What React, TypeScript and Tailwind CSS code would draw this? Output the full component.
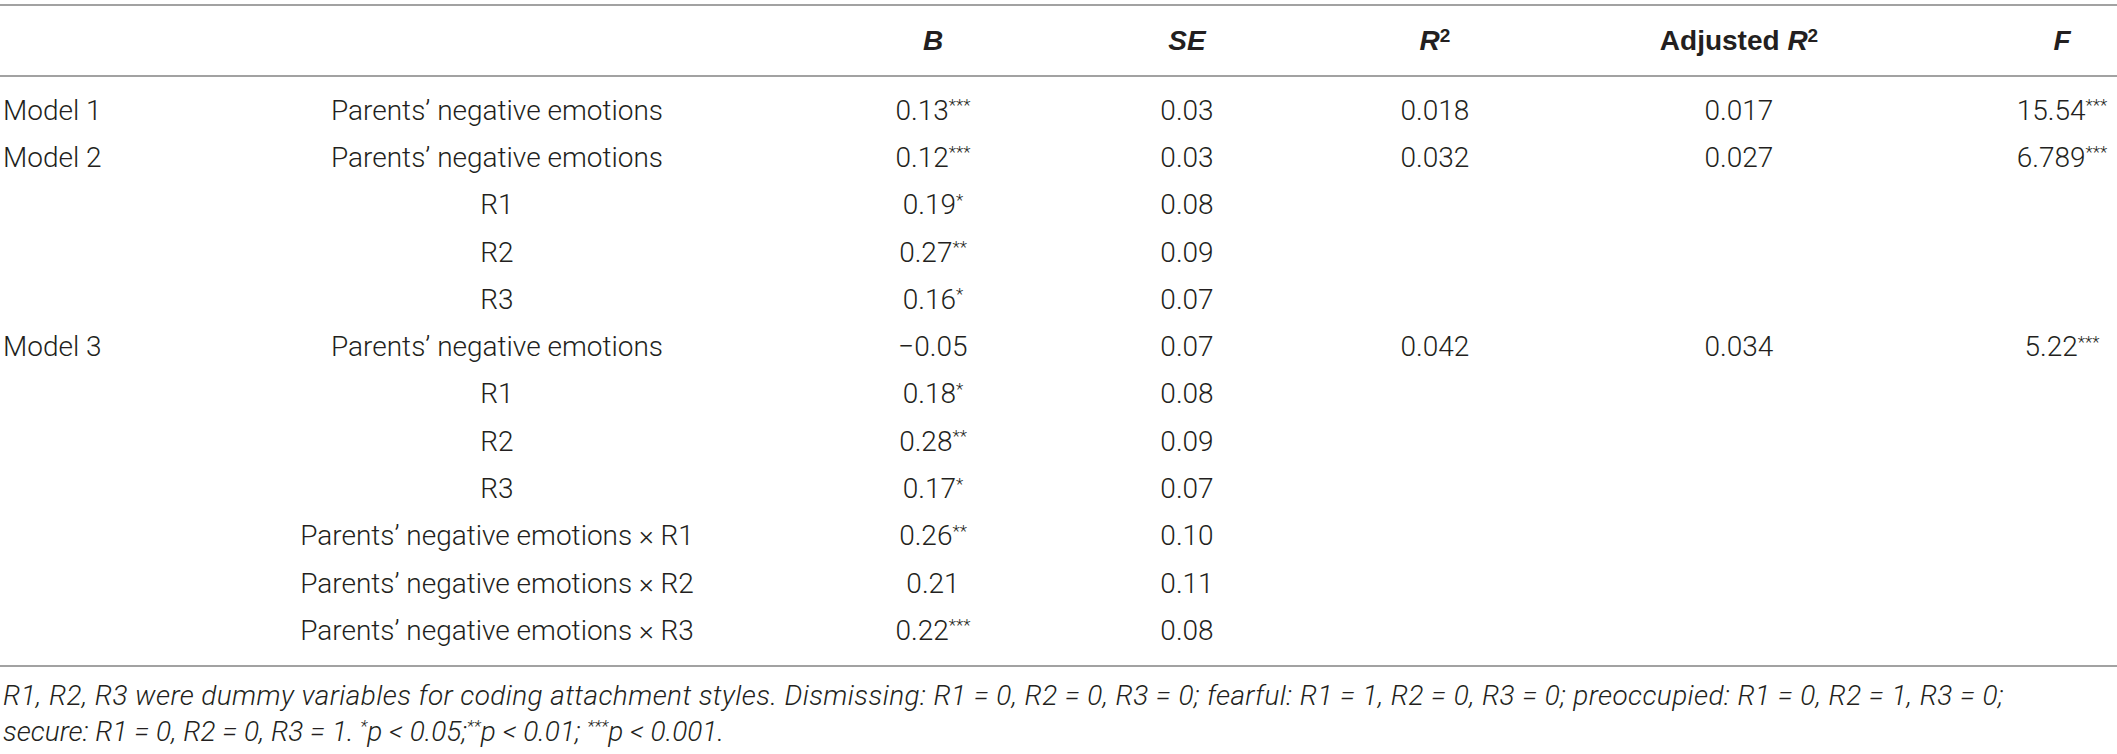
type Row = {
  model?: string;
  label: string;
  b: string;
  bs?: string;
  se: string;
  r2?: string;
  adj?: string;
  f?: string;
  fs?: string;
};

const rows: Row[] = [
  { model: 'Model 1', label: 'Parents’ negative emotions', b: '0.13', bs: '***', se: '0.03', r2: '0.018', adj: '0.017', f: '15.54', fs: '***' },
  { model: 'Model 2', label: 'Parents’ negative emotions', b: '0.12', bs: '***', se: '0.03', r2: '0.032', adj: '0.027', f: '6.789', fs: '***' },
  { label: 'R1', b: '0.19', bs: '*', se: '0.08' },
  { label: 'R2', b: '0.27', bs: '**', se: '0.09' },
  { label: 'R3', b: '0.16', bs: '*', se: '0.07' },
  { model: 'Model 3', label: 'Parents’ negative emotions', b: '−0.05', se: '0.07', r2: '0.042', adj: '0.034', f: '5.22', fs: '***' },
  { label: 'R1', b: '0.18', bs: '*', se: '0.08' },
  { label: 'R2', b: '0.28', bs: '**', se: '0.09' },
  { label: 'R3', b: '0.17', bs: '*', se: '0.07' },
  { label: 'Parents’ negative emotions × R1', b: '0.26', bs: '**', se: '0.10' },
  { label: 'Parents’ negative emotions × R2', b: '0.21', se: '0.11' },
  { label: 'Parents’ negative emotions × R3', b: '0.22', bs: '***', se: '0.08' },
];

// column tracks chosen so each centre lands where the reference has it
const cols = 'grid grid-cols-[103px_788px_84px_424px_72px_536px_110px]';

function Stars({ s }: { s?: string }) {
  if (!s) return null;
  return <sup className="text-[17px]">{s}</sup>;
}

function Cell({ children }: { children?: React.ReactNode }) {
  return (
    <div className="flex justify-center whitespace-nowrap">
      <span>{children}</span>
    </div>
  );
}

export default function App() {
  return (
    <div className="w-[2117px] h-[754px] overflow-hidden bg-white pt-[4px] text-[#231f20] font-['Roboto','Liberation_Sans',sans-serif] font-light text-[28px] leading-[32px]">
      {/* header */}
      <div className={`${cols} h-[73px] items-center border-y-2 border-[#a2a2a2] font-['Liberation_Sans',Arial,sans-serif] font-bold`}>
        <div />
        <div />
        <Cell><i>B</i></Cell>
        <Cell><i>SE</i></Cell>
        <Cell>
          <i>R</i>
          <sup className="text-[19px] -top-[8px]">2</sup>
        </Cell>
        <Cell>
          Adjusted <i>R</i>
          <sup className="text-[19px] -top-[8px]">2</sup>
        </Cell>
        <Cell><i>F</i></Cell>
      </div>

      {/* body */}
      <div className="pt-[10px] pb-[10px] border-b-2 border-[#a2a2a2]">
        {rows.map((r, i) => (
          <div key={i} className={`${cols} h-[47.3px] items-center`}>
            <div className="pl-[3px] whitespace-nowrap">{r.model}</div>
            <Cell>{r.label}</Cell>
            <Cell>
              {r.b}
              <Stars s={r.bs} />
            </Cell>
            <Cell>{r.se}</Cell>
            <Cell>{r.r2}</Cell>
            <Cell>{r.adj}</Cell>
            <Cell>
              {r.f}
              <Stars s={r.fs} />
            </Cell>
          </div>
        ))}
      </div>

      {/* footnote */}
      <div className="pt-[11px] pl-[3px] italic leading-[36px] whitespace-nowrap">
        <div className="tracking-[0.4px]">
          R1, R2, R3 were dummy variables for coding attachment styles. Dismissing: R1 = 0, R2 = 0, R3 = 0; fearful: R1 = 1, R2 = 0, R3 = 0; preoccupied: R1 = 0, R2 = 1, R3 = 0;
        </div>
        <div>
          secure: R1 = 0, R2 = 0, R3 = 1. <Stars s="*" />p &lt; 0.05;<Stars s="**" />p &lt; 0.01; <Stars s="***" />p &lt; 0.001.
        </div>
      </div>
    </div>
  );
}
